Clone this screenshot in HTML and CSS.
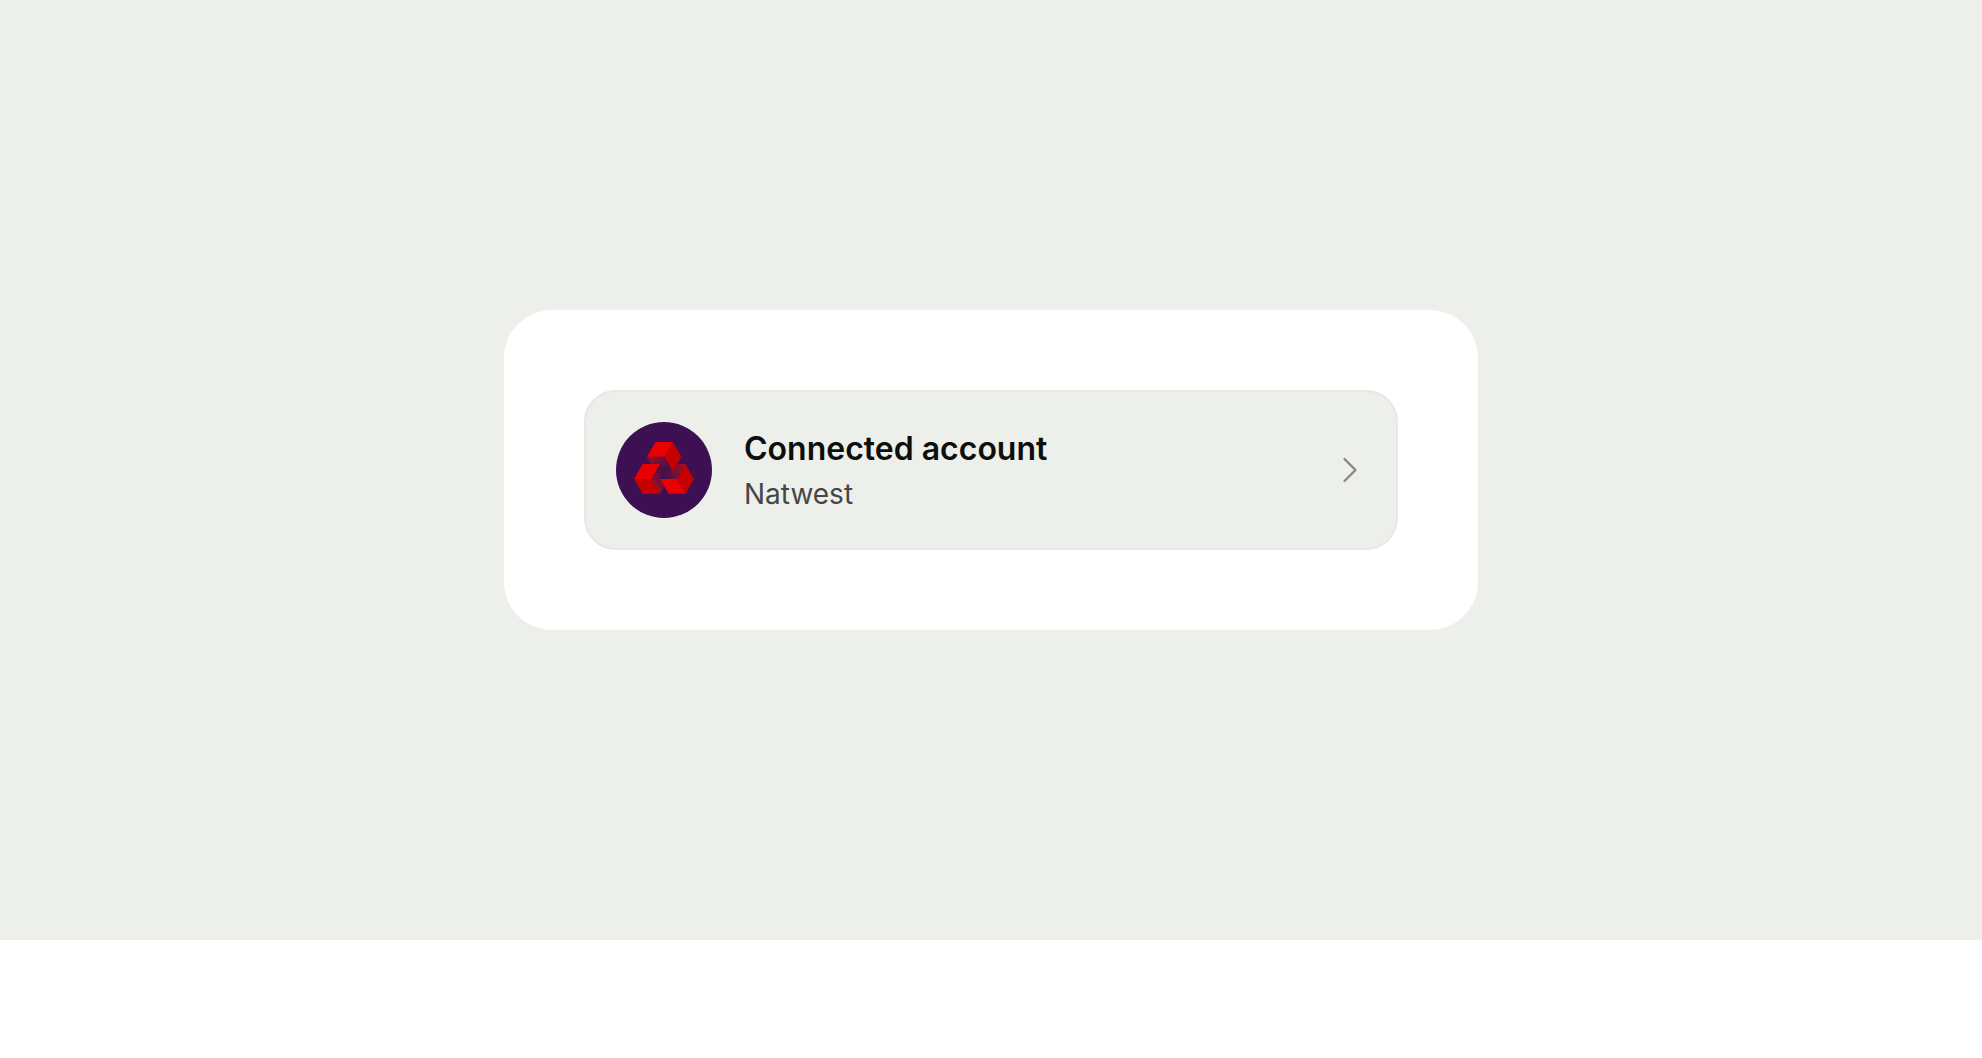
FILE: index.html
```html
<!DOCTYPE html>
<html lang="en">
<head>
<meta charset="UTF-8" />
<meta name="viewport" content="width=device-width, initial-scale=1" />
<title>Connected account</title>
<link rel="stylesheet" href="styles.css">
</head>
<body>
<main class="stage">
  <div class="card">
    <button type="button" class="account">
      <svg class="logo" viewBox="0 0 96 96" aria-hidden="true">
        <defs>
          <linearGradient id="shadeTop" gradientUnits="userSpaceOnUse" x1="34" y1="30" x2="51" y2="50">
            <stop offset="0" stop-color="#a0101f" />
            <stop offset="1" stop-color="#3c1053" />
          </linearGradient>
          <linearGradient id="shadeLeft" gradientUnits="userSpaceOnUse" x1="38" y1="66" x2="53" y2="54">
            <stop offset="0" stop-color="#a0101f" />
            <stop offset="1" stop-color="#3c1053" />
          </linearGradient>
          <linearGradient id="shadeRight" gradientUnits="userSpaceOnUse" x1="69" y1="46" x2="46" y2="51">
            <stop offset="0" stop-color="#a0101f" />
            <stop offset="1" stop-color="#3c1053" />
          </linearGradient>
        </defs>
        <circle cx="48" cy="48" r="48" fill="#3c1053" />
        <!-- inner faces -->
        <path fill="url(#shadeLeft)" d="M44 42l8.5 15L44 71.7 35.4 57z" />
        <path fill="url(#shadeTop)" d="M31 34.7h17.5L57 49.5H48L44 42H35z" />
        <path fill="url(#shadeRight)" d="M52.4 49.5L57 42h12.6L61 57H44l4-7.5z" />
        <!-- light faces -->
        <path fill="#eb0000" d="M39.5 20H57l-8.5 14.7H31z" />
        <path fill="#eb0000" d="M26.7 42H44l-8.6 15H18z" />
        <path fill="#eb0000" d="M44 57h17l8.6 14.7H52.6z" />
        <!-- dark faces -->
        <path fill="#c40000" d="M57 20l8.5 14.7L57 49.5l-8.5-14.8z" />
        <path fill="#c40000" d="M18 57h17.4L44 71.7H26.7z" />
        <path fill="#c40000" d="M69.6 42L78 57l-8.4 14.7L61 57z" />
      </svg>
      <span class="details">
        <span class="title">Connected account</span>
        <span class="bank">Natwest</span>
      </span>
      <svg class="chevron" viewBox="0 0 32 32" aria-hidden="true">
        <path stroke-width="2.3" d="M10.5 5l11 11-11 11" />
      </svg>
    </button>
  </div>
</main>
</body>
</html>
```

FILE: styles.css
```css
body { margin: 0; background: #fff; font-family: Inter, sans-serif; }

.stage {
  display: flex;
  align-items: center;
  justify-content: center;
  box-sizing: border-box;
  min-height: 940px;
  padding: 40px;
  background: #ecefea;
}

.card {
  box-sizing: border-box;
  width: 100%;
  max-width: 974px;
  padding: 80px;
  border-radius: 48px;
  background: #fff;
}

.account {
  display: flex;
  align-items: center;
  gap: 32px;
  width: 100%;
  padding: 30px;
  border: 2px solid #e7e8e4;
  border-radius: 32px;
  background: #ecefea;
  font-family: inherit;
  text-align: left;
  cursor: pointer;
}

.logo { flex: none; width: 96px; height: 96px; }

.details { flex: 1; display: flex; flex-direction: column; gap: 4px; }
.title { font-size: 32px; line-height: 44px; font-weight: 600; color: #0e0f0c; }
.bank { font-size: 28px; line-height: 38px; color: #454745; }

.chevron { flex: none; width: 32px; height: 32px; }
.chevron path { fill: none; stroke: #868685; stroke-linecap: round; stroke-linejoin: round; }
```
